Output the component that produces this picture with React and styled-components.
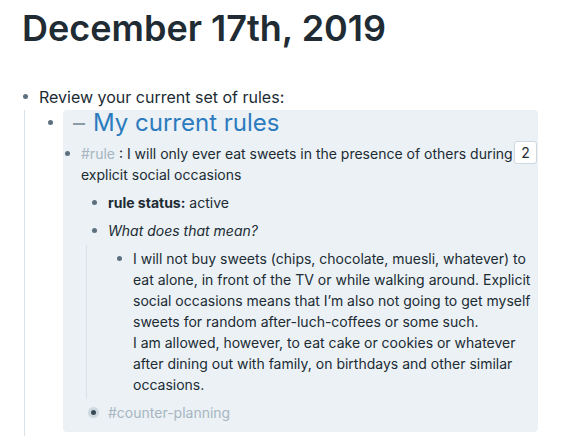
import React from 'react';
import styled, { createGlobalStyle } from 'styled-components';

const GlobalStyle = createGlobalStyle`
  body {
    margin: 0;
    background: #ffffff;
    font-family: Inter, "Noto Sans", sans-serif;
    color: #202B33;
  }
`;

const Page = styled.div`
  padding: 7px 23px 0 15px;
  width: 561px;
  box-sizing: border-box;
`;

const Title = styled.h1`
  margin: 0 0 31px 7px;
  font-size: 36px;
  font-weight: 600;
  line-height: 1.21;
  color: #202B33;
`;

const Row = styled.div`
  display: flex;
  align-items: flex-start;
  padding: ${(p) => p.$pad || '3.5px 0'};
`;

const BulletCol = styled.div`
  flex: 0 0 20px;
  height: ${(p) => p.$h || 21}px;
  display: flex;
  align-items: center;
  justify-content: center;
`;

const Dot = styled.span`
  width: 5px;
  height: 5px;
  border-radius: 50%;
  background: #5C7080;
`;

const Collapsed = styled.span`
  width: 11px;
  height: 11px;
  border-radius: 50%;
  background: #CED9E0;
  display: flex;
  align-items: center;
  justify-content: center;
  margin-left: -2px;

  &::after {
    content: '';
    width: 5px;
    height: 5px;
    border-radius: 50%;
    background: #394B59;
  }
`;

const Text = styled.div`
  flex: 1;
  margin-left: 4px;
  font-size: ${(p) => p.$size || 14}px;
  line-height: ${(p) => p.$lh || 21}px;
`;

const Children = styled.div`
  margin-left: ${(p) => p.$indent}px;
  padding-left: ${(p) => p.$pl || 0}px;
  border-left: ${(p) => (p.$line ? '1px solid #D8E1E8' : 'none')};
`;

const Box = styled.div`
  flex: 1;
  background: #EBF1F5;
  border-radius: 4px;
  padding: 0 1px 5.5px 0;
  margin-left: 3px;
`;

const Heading = styled.div`
  display: flex;
  align-items: center;
  gap: 8px;
  padding: 0 0 4px 10px;
  font-size: 24px;
  line-height: 26px;
  color: #2B7BBE;
`;

const Dash = styled.span`
  color: #8A9BA8;
`;

const Tag = styled.span`
  color: #A7B6C2;
`;

const Count = styled.span`
  flex: 0 0 auto;
  display: flex;
  align-items: center;
  justify-content: center;
  width: 21px;
  height: 21px;
  margin-top: -2px;
  background: #ffffff;
  border: 1px solid #CED9E0;
  border-radius: 3px;
  font-size: 14px;
  color: #202B33;
`;

export default function App() {
  return (
    <Page>
      <GlobalStyle />
      <Title>December 17th, 2019</Title>

      <Row $pad="3px 0 1px">
        <BulletCol $h={24}><Dot /></BulletCol>
        <Text $size={16} $lh={24}>Review your current set of rules:</Text>
      </Row>

      <Children $indent={9} $pl={15} $line>
        <Row $pad="0">
          <BulletCol $h={26}><Dot /></BulletCol>
          <Box>
            <Heading>
              <Dash>–</Dash>
              <span>My current rules</span>
            </Heading>

            <Children $indent={-6}>
              <Row>
                <BulletCol><Dot /></BulletCol>
                <Text>
                  <Tag>#rule</Tag> : I will only ever eat sweets in the presence of others during explicit social occasions
                </Text>
                <Count>2</Count>
              </Row>

              <Children $indent={27}>
                <Row>
                  <BulletCol><Dot /></BulletCol>
                  <Text><b>rule status:</b> active</Text>
                </Row>
                <Row>
                  <BulletCol><Dot /></BulletCol>
                  <Text><i>What does that mean?</i></Text>
                </Row>

                <Children $indent={2} $pl={22} $line>
                  <Row>
                    <BulletCol><Dot /></BulletCol>
                    <Text>
                      I will not buy sweets (chips, chocolate, muesli, whatever) to eat alone, in front of the TV or while walking around. Explicit social occasions means that I’m also not going to get myself sweets for random after-luch-coffees or some such.
                      <br />
                      I am allowed, however, to eat cake or cookies or whatever after dining out with family, on birthdays and other similar occasions.
                    </Text>
                  </Row>
                </Children>

                <Row>
                  <BulletCol><Collapsed /></BulletCol>
                  <Text><Tag>#counter-planning</Tag></Text>
                </Row>
              </Children>
            </Children>
          </Box>
        </Row>
        <Row $pad="0 0 4px" />
      </Children>
    </Page>
  );
}
